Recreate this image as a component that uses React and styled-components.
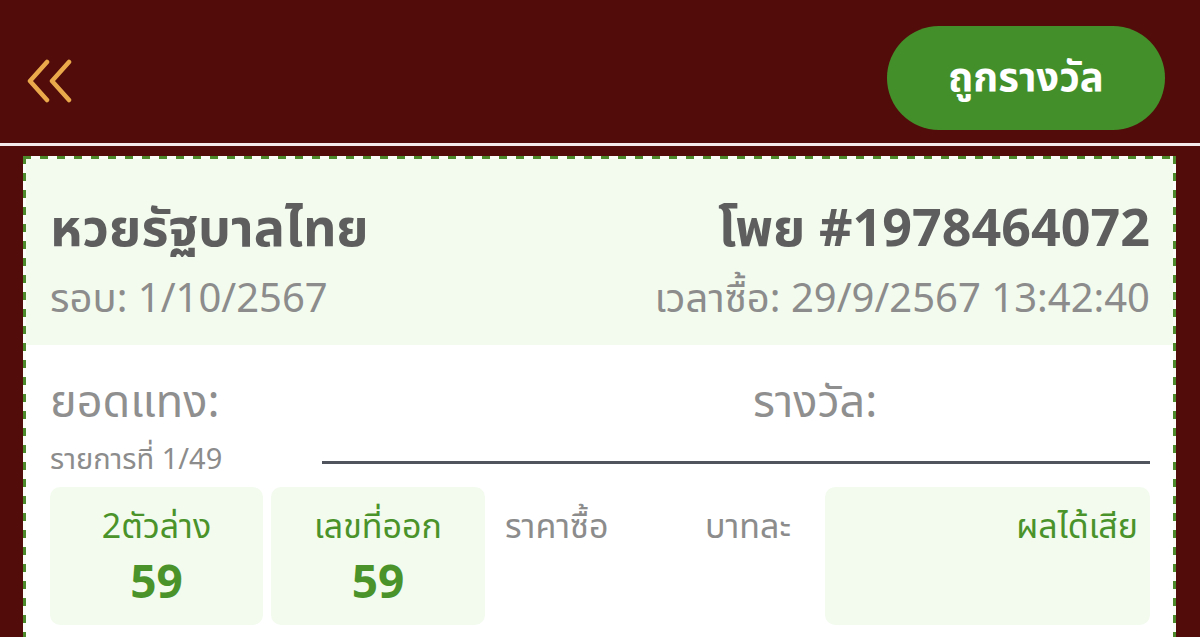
import React from "react";
import styled, { createGlobalStyle } from "styled-components";

const GlobalStyle = createGlobalStyle`
  html, body {
    margin: 0;
    padding: 0;
    background: #520d0a;
    font-family: "Noto Sans", "Noto Sans Thai", "Open Sans", sans-serif;
  }
  * { box-sizing: border-box; }
`;

const Page = styled.div`
  width: 1200px;
  height: 637px;
  overflow: hidden;
  background: #520d0a;
`;

const TopBar = styled.header`
  height: 146px;
  display: flex;
  align-items: flex-start;
  justify-content: space-between;
  padding: 0 35px 0 25px;
  border-bottom: 3px solid #f4ecec;
`;

const BackButton = styled.button`
  border: 0;
  background: none;
  padding: 0;
  margin-top: 59px;
  width: 50px;
  height: 44px;
  display: flex;
  align-items: center;
  cursor: pointer;
`;

const WinButton = styled.button`
  width: 278px;
  height: 104px;
  margin-top: 26px;
  border: 0;
  border-radius: 52px;
  background: #43902b;
  color: #fff;
  font-family: inherit;
  font-size: 40px;
  font-weight: 700;
  cursor: pointer;
`;

// dashed frame drawn with gradients so the dash length matches (8px on, 9px off)
const dashX = "repeating-linear-gradient(90deg, #4c8a2c 0 8px, transparent 8px 17px)";
const dashY = "repeating-linear-gradient(180deg, #4c8a2c 0 8px, transparent 8px 17px)";

const Card = styled.section`
  margin: 10px 24px 0 23px;
  padding: 3px;
  background:
    ${dashX} top left / 100% 3px no-repeat,
    ${dashX} bottom left / 100% 3px no-repeat,
    ${dashY} top left / 3px 100% no-repeat,
    ${dashY} top right / 3px 100% no-repeat,
    #fbfdf9;
`;

const CardHead = styled.div`
  background: #f3fbef;
  padding: 35px 23px 20px 24px;
  display: flex;
  justify-content: space-between;
`;

const HeadCol = styled.div`
  display: flex;
  flex-direction: column;
  align-items: ${(p) => (p.$right ? "flex-end" : "flex-start")};
`;

const Title = styled.div`
  font-size: 52px;
  font-weight: 700;
  color: #5e5e5e;
  line-height: 64px;
`;

const Sub = styled.div`
  margin-top: 11px;
  font-size: 40px;
  color: #8c8c8c;
  line-height: 56px;
`;

const CardBody = styled.div`
  background: #fff;
  padding: 25px 23px 40px 24px;
`;

const TotalsRow = styled.div`
  display: grid;
  grid-template-columns: 1fr 1fr;
`;

const TotalLabel = styled.div`
  font-size: 45px;
  color: #8f8f8f;
  line-height: 60px;
  padding-left: ${(p) => p.$indent || 0}px;
`;

const ItemRow = styled.div`
  display: flex;
  align-items: center;
  gap: 100px;
  margin-top: 11px;
`;

const ItemCount = styled.div`
  font-size: 29px;
  color: #8c8c8c;
  line-height: 34px;
`;

const Rule = styled.div`
  flex: 1;
  height: 3px;
  margin-top: 8px;
  background: #50545c;
`;

const Grid = styled.div`
  display: grid;
  grid-template-columns: 213px 214px 192px 124px 1fr;
  gap: 8px;
  margin-top: 12px;
`;

const Cell = styled.div`
  height: 138px;
  border-radius: 10px;
  background: ${(p) => (p.$tint ? "#f3fbef" : "transparent")};
  display: flex;
  flex-direction: column;
  align-items: ${(p) => p.$align || "center"};
  padding: 13px 12px 0;
`;

const CellLabel = styled.div`
  font-size: 34px;
  line-height: 50px;
  color: ${(p) => (p.$green ? "#4a932a" : "#8c8c8c")};
`;

const CellValue = styled.div`
  font-size: 46px;
  font-weight: 700;
  line-height: 60px;
  color: #4a932a;
`;

const Chevrons = () => (
  <svg width="48" height="44" viewBox="0 0 48 44" fill="none">
    <path
      d="M22 3 L5 22 L22 41 M44 3 L27 22 L44 41"
      stroke="#eaaa4c"
      strokeWidth="4.5"
      strokeLinecap="round"
      strokeLinejoin="round"
    />
  </svg>
);

export default function App() {
  return (
    <Page>
      <GlobalStyle />
      <TopBar>
        <BackButton aria-label="back">
          <Chevrons />
        </BackButton>
        <WinButton>ถูกรางวัล</WinButton>
      </TopBar>
      <Card>
        <CardHead>
          <HeadCol>
            <Title>หวยรัฐบาลไทย</Title>
            <Sub>รอบ: 1/10/2567</Sub>
          </HeadCol>
          <HeadCol $right>
            <Title>โพย #1978464072</Title>
            <Sub>เวลาซื้อ: 29/9/2567 13:42:40</Sub>
          </HeadCol>
        </CardHead>
        <CardBody>
          <TotalsRow>
            <TotalLabel>ยอดแทง:</TotalLabel>
            <TotalLabel $indent={153}>รางวัล:</TotalLabel>
          </TotalsRow>
          <ItemRow>
            <ItemCount>รายการที่ 1/49</ItemCount>
            <Rule />
          </ItemRow>
          <Grid>
            <Cell $tint>
              <CellLabel $green>2ตัวล่าง</CellLabel>
              <CellValue>59</CellValue>
            </Cell>
            <Cell $tint>
              <CellLabel $green>เลขที่ออก</CellLabel>
              <CellValue>59</CellValue>
            </Cell>
            <Cell $align="flex-start">
              <CellLabel>ราคาซื้อ</CellLabel>
            </Cell>
            <Cell $align="flex-start">
              <CellLabel>บาทละ</CellLabel>
            </Cell>
            <Cell $tint $align="flex-end">
              <CellLabel $green>ผลได้เสีย</CellLabel>
            </Cell>
          </Grid>
        </CardBody>
      </Card>
    </Page>
  );
}
